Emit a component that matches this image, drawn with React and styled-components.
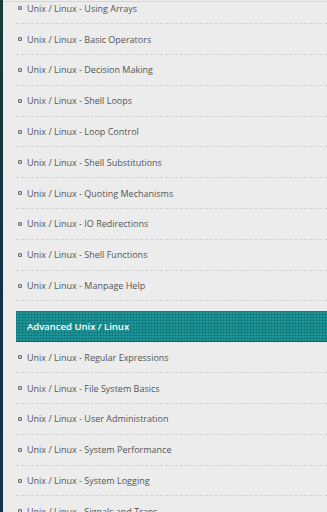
import React from "react";
import styled, { createGlobalStyle } from "styled-components";

const GlobalStyle = createGlobalStyle`
  html, body {
    margin: 0;
    padding: 0;
    height: 100%;
    overflow: hidden;
    background: #ebebeb;
  }
  body {
    font-family: "Open Sans", "Liberation Sans", sans-serif;
  }
`;

const firstGroup = [
  "Unix / Linux - Using Arrays",
  "Unix / Linux - Basic Operators",
  "Unix / Linux - Decision Making",
  "Unix / Linux - Shell Loops",
  "Unix / Linux - Loop Control",
  "Unix / Linux - Shell Substitutions",
  "Unix / Linux - Quoting Mechanisms",
  "Unix / Linux - IO Redirections",
  "Unix / Linux - Shell Functions",
  "Unix / Linux - Manpage Help",
];

const secondGroup = [
  "Unix / Linux - Regular Expressions",
  "Unix / Linux - File System Basics",
  "Unix / Linux - User Administration",
  "Unix / Linux - System Performance",
  "Unix / Linux - System Logging",
  "Unix / Linux - Signals and Traps",
];

const App = () => {
  return (
    <>
      <GlobalStyle />
      <Page>
        <SideStrip />
        <Sidebar>
          <TopRule />
          <List>
            {firstGroup.map((item) => (
              <Item key={item}>
                <ItemLink>{item}</ItemLink>
              </Item>
            ))}
          </List>
          <Heading>Advanced Unix / Linux</Heading>
          <List>
            {secondGroup.map((item) => (
              <Item key={item}>
                <ItemLink>{item}</ItemLink>
              </Item>
            ))}
          </List>
        </Sidebar>
      </Page>
    </>
  );
};

const Page = styled.div`
  display: flex;
  width: 327px;
  height: 512px;
  overflow: hidden;
`;

const SideStrip = styled.div`
  flex: 0 0 3px;
  background: linear-gradient(to bottom, #1c3a36, #14304a 60%, #18324e);
`;

const Sidebar = styled.div`
  flex: 1;
  position: relative;
  background: #ececec;
  padding-left: 13px;
`;

const TopRule = styled.div`
  position: absolute;
  top: 1px;
  left: 0;
  right: 0;
  height: 1px;
  background: #d6d6d6;
`;

const List = styled.ul`
  list-style: none;
  margin: 0;
  padding: 0;
  &:first-of-type {
    margin-top: -6.5px;
  }
`;

const Item = styled.li`
  height: 29.8px;
  display: flex;
  align-items: center;
  border-bottom: 1px dashed #d2d2d2;
`;

const ItemLink = styled.a`
  display: flex;
  align-items: center;
  gap: 5px;
  padding-left: 2px;
  font-size: 9px;
  color: #555555;
  text-decoration: none;
  &::before {
    content: "";
    width: 2px;
    height: 2px;
    border: 1.5px solid #6e6e6e;
    border-radius: 1px;
    background: #c8c8c8;
    flex: 0 0 auto;
  }
`;

const Heading = styled.div`
  margin-top: 10px;
  height: 30px;
  display: flex;
  align-items: center;
  padding-left: 11px;
  font-size: 9.5px;
  font-weight: 600;
  color: #ffffff;
  background-color: #1b9597;
  background-image:
    repeating-linear-gradient(to right, rgba(0, 55, 65, 0.2) 0 1px, transparent 1px 3px),
    repeating-linear-gradient(to bottom, rgba(0, 55, 65, 0.2) 0 1px, transparent 1px 3px);
  border-bottom: 1px solid #2f5458;
`;

export default App;
